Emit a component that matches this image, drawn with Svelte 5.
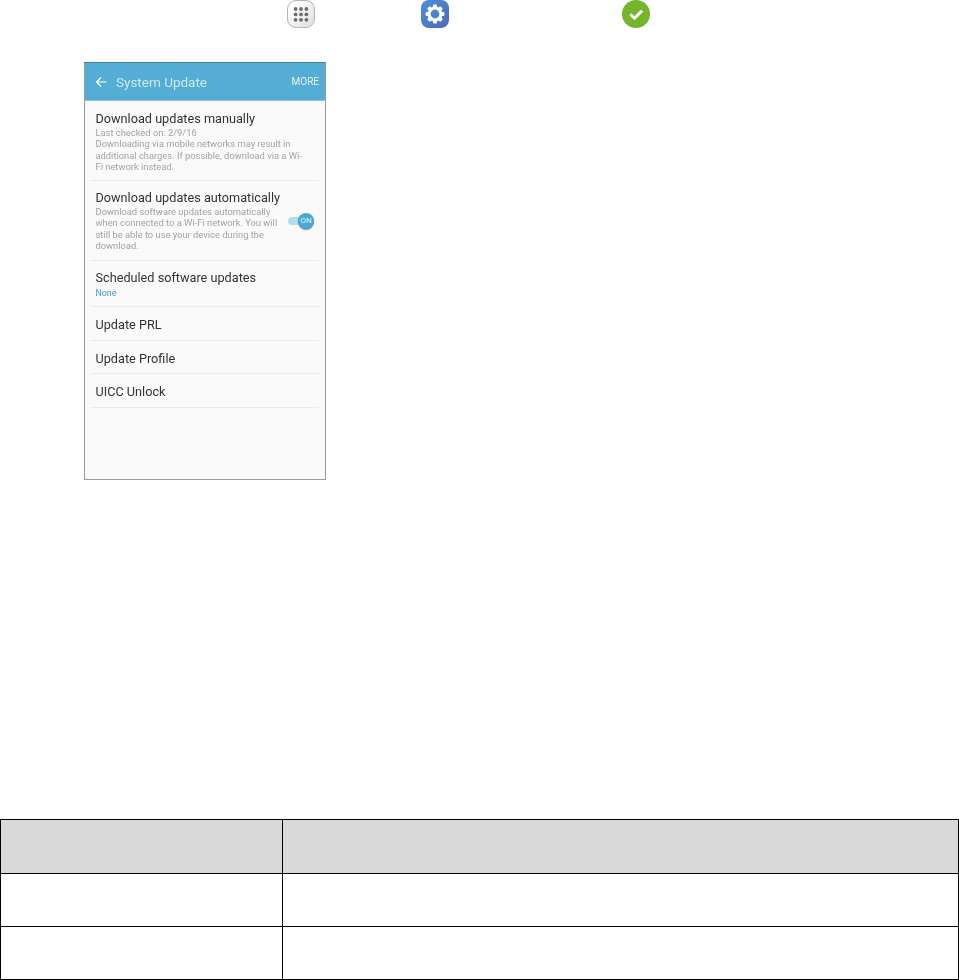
<script>
  let teeth = [0, 45, 90, 135];
  let dots = [0, 1, 2];
</script>

<div class="page">
  <div class="icons">
    <div class="ico apps">
      <svg width="28" height="28" viewBox="0 0 28 28">
        {#each dots as r}
          {#each dots as c}
            <circle cx={8.6 + c * 5.4} cy={9 + r * 5.4} r="1.9" fill="#68706e" />
          {/each}
        {/each}
      </svg>
    </div>
    <div class="ico gear">
      <svg width="28" height="28" viewBox="0 0 28 28">
        {#each teeth as t}
          <rect x="12" y="4.6" width="4" height="18.8" rx="1" fill="#fff" transform="rotate({t} 14 14)" />
        {/each}
        <circle cx="14" cy="14" r="7.4" fill="#fff" />
        <circle cx="14" cy="14" r="4.4" fill="#4a86cf" />
      </svg>
    </div>
    <div class="ico check">
      <svg width="28" height="28" viewBox="0 0 28 28">
        <path d="M8.5 14.2l4 4 7.5-7.5" fill="none" stroke="#fff" stroke-width="3" />
      </svg>
    </div>
  </div>

  <div class="phone">
    <div class="bar">
      <svg class="back" width="12" height="12" viewBox="0 0 12 12">
        <path d="M11.5 6H1.5M6 1.5L1.5 6 6 10.5" fill="none" stroke="#fff" stroke-width="1.2" />
      </svg>
      <span class="title">System Update</span>
      <span class="more">MORE</span>
    </div>
    <div class="list">
      <div class="item first">
        <div class="name">Download updates manually</div>
        <div class="sub">Last checked on: 2/9/16<br />Downloading via mobile networks may result in<br />additional charges. If possible, download via a Wi-<br />Fi network instead.</div>
      </div>
      <div class="item second">
        <div class="row">
          <div>
            <div class="name">Download updates automatically</div>
            <div class="sub">Download software updates automatically<br />when connected to a Wi-Fi network. You will<br />still be able to use your device during the<br />download.</div>
          </div>
          <div class="toggle"><span class="thumb">ON</span></div>
        </div>
      </div>
      <div class="item third">
        <div class="name">Scheduled software updates</div>
        <div class="sub none">None</div>
      </div>
      <div class="item plain"><div class="name">Update PRL</div></div>
      <div class="item plain"><div class="name">Update Profile</div></div>
      <div class="item plain"><div class="name">UICC Unlock</div></div>
    </div>
  </div>

  <table>
    <tbody>
      <tr class="head"><td class="left"></td><td></td></tr>
      <tr><td class="left"></td><td></td></tr>
      <tr><td class="left"></td><td></td></tr>
    </tbody>
  </table>
</div>

<style>
  :global(body) {
    background: #fff;
  }
  .page {
    width: 959px;
    height: 980px;
    font-family: Roboto, "Liberation Sans", sans-serif;
    overflow: hidden;
  }
  .icons {
    display: flex;
    padding-left: 287px;
    height: 29px;
  }
  .ico {
    width: 28px;
    height: 28px;
    box-sizing: border-box;
  }
  .ico svg {
    display: block;
  }
  .apps {
    border: 1px solid #b5b5b5;
    border-radius: 9px;
    background: linear-gradient(135deg, #fff 20%, #dedede);
    margin-right: 106px;
  }
  .apps svg {
    margin: -1px;
  }
  .gear {
    border-radius: 8px;
    background: linear-gradient(135deg, #4a8fd8, #4a6db5);
    margin-right: 173px;
  }
  .check {
    border-radius: 50%;
    background: #74b52c;
  }
  .phone {
    margin: 33px 0 0 84px;
    width: 242px;
    height: 418px;
    box-sizing: border-box;
    border: 1px solid #9a9a9a;
    border-top-color: #3d7f9c;
    background: #fafafa;
  }
  .bar {
    height: 37px;
    background: #53add4;
    border-bottom: 1px solid #8ec4dc;
    display: flex;
    align-items: center;
    padding: 0 6px 0 10px;
    color: #fff;
    filter: blur(0.3px);
  }
  .title {
    margin-left: 9px;
    font-size: 13.5px;
    color: #cfe8f3;
  }
  .more {
    margin-left: auto;
    font-size: 10px;
    color: #e8f4f9;
  }
  .list {
    padding: 0 6px;
  }
  .item {
    box-sizing: border-box;
    border-bottom: 1px solid #ececec;
    padding: 10px 0 0 4.5px;
  }
  .first {
    height: 80px;
  }
  .second {
    height: 80px;
    padding-top: 9px;
  }
  .third {
    height: 46px;
    padding-top: 9px;
  }
  .plain {
    height: 33.6px;
    padding-top: 10px;
  }
  .name {
    font-size: 12.7px;
    line-height: 15px;
    color: #333;
    filter: blur(0.3px);
  }
  .sub {
    font-size: 9.35px;
    line-height: 11.3px;
    color: #a3a3a3;
    margin-top: 1px;
    white-space: nowrap;
    filter: blur(0.3px);
  }
  .none {
    color: #3d9fc8;
    font-size: 8.8px;
    margin-top: 3px;
  }
  .row {
    display: flex;
    padding-right: 9px;
  }
  .toggle {
    position: relative;
    margin: 27px 0 0 auto;
    width: 22px;
    height: 8px;
    border-radius: 4px;
    background: #b5dcee;
    flex: none;
  }
  .thumb {
    position: absolute;
    right: -4px;
    top: -4px;
    width: 16px;
    height: 16px;
    border-radius: 50%;
    background: #46a9d6;
    box-shadow: 0 1px 1px #8a8a8a;
    color: #e6f5fb;
    font-size: 8px;
    line-height: 16px;
    text-align: center;
  }
  table {
    margin-top: 339px;
    width: 959px;
    border-collapse: collapse;
    table-layout: fixed;
  }
  td {
    border: 1px solid #000;
    padding: 0;
    height: 52px;
  }
  .left {
    width: 281px;
  }
  .head td {
    background: #d9d9d9;
    height: 53px;
  }
</style>
